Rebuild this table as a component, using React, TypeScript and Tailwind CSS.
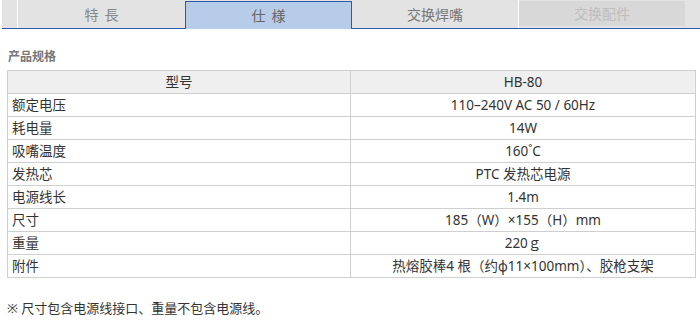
import React from "react";

const specs: [string, string][] = [
  ["额定电压", "110–240V AC 50 / 60Hz"],
  ["耗电量", "14W"],
  ["吸嘴温度", "160˚C"],
  ["发热芯", "PTC 发热芯电源"],
  ["电源线长", "1.4m"],
  ["尺寸", "185（W）×155（H）mm"],
  ["重量", "220ｇ"],
  ["附件", "热熔胶棒4 根（约φ11×100mm）、胶枪支架"],
];

const font = { fontFamily: '"Noto Sans", "Noto Sans CJK SC", sans-serif' };

export default function App() {
  return (
    <div className="w-[700px] h-[330px] bg-white overflow-hidden" style={font}>
      {/* tabs */}
      <div className="ml-[2px] flex h-[29px] bg-[#e2e3e2] border-b border-[#2c5aa9]">
        <div className="w-[16px] border-r border-white" />
        <div className="w-[167px] flex items-center justify-center text-[14px] text-[#888] tracking-[6px] pl-[6px]">
          特長
        </div>
        <div className="w-[167px] mt-[1px] -mb-px h-[28px] bg-[#b7cce8] border-x border-t border-[#2c5aa9] flex items-center justify-center text-[14px] text-[#666] tracking-[6px] pl-[6px]">
          仕様
        </div>
        <div className="w-[167px] flex items-center justify-center text-[14px] text-[#777] border-r border-white">
          交换焊嘴
        </div>
        <div className="w-[166px] mt-[1px] h-[25px] bg-[#d8d8d8] flex items-center justify-center text-[14px] text-[#bdbdbd]">
          交换配件
        </div>
      </div>

      <div className="pl-[8px] pt-[20px] text-[12px] font-bold text-[#777] leading-[16px]">产品规格</div>

      <table className="ml-[7px] mt-[5px] w-[689px] border-collapse text-[13.5px] text-[#333]">
        <tbody>
          <tr className="h-[23px] bg-[#efefef]">
            <td className="w-[343px] border border-[#cfcfcf] text-center p-0">型号</td>
            <td className="border border-[#cfcfcf] text-center p-0">HB-80</td>
          </tr>
          {specs.map(([k, v]) => (
            <tr key={k} className="h-[23px]">
              <td className="border border-[#cfcfcf] pl-[4px] p-0">{k}</td>
              <td className="border border-[#cfcfcf] text-center p-0">{v}</td>
            </tr>
          ))}
        </tbody>
      </table>

      <div className="pl-[7px] pt-[21px] text-[13px] text-[#333]">※ 尺寸包含电源线接口、重量不包含电源线。</div>
    </div>
  );
}
